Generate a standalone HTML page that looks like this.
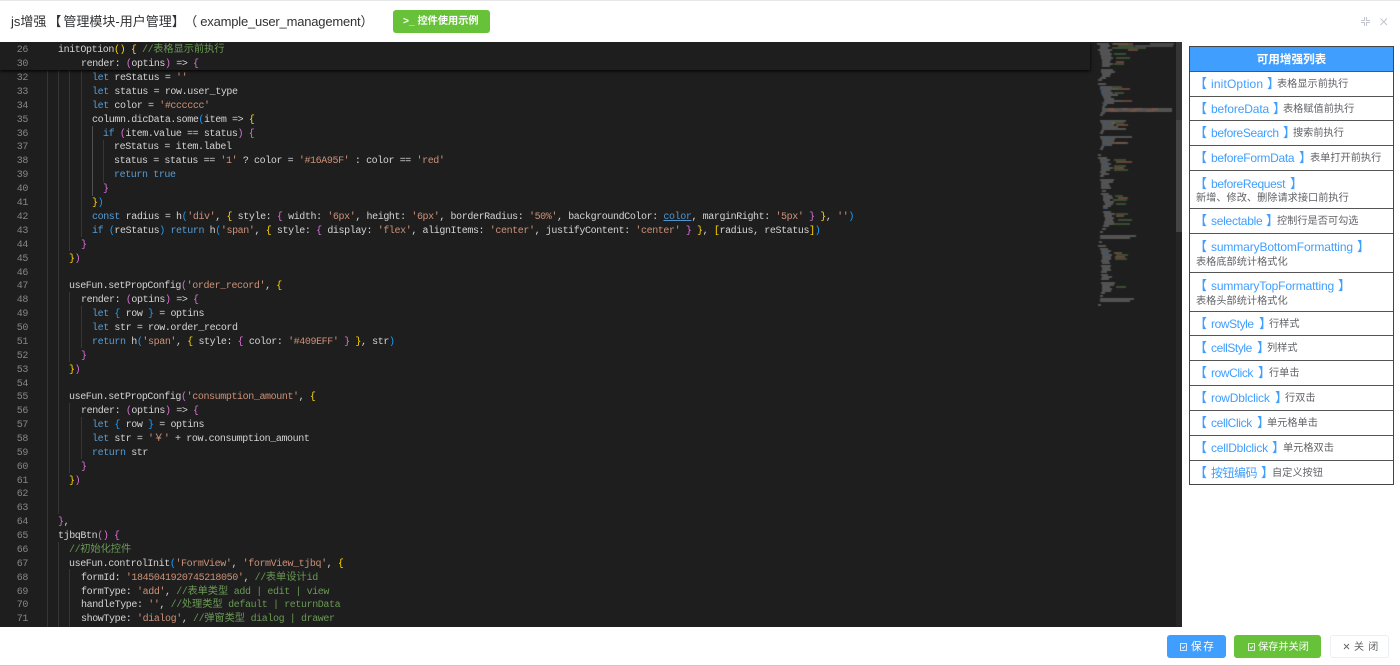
<!DOCTYPE html>
<html lang="zh">
<head>
<meta charset="utf-8">
<title>js增强</title>
<style>
*{box-sizing:border-box}
html,body{margin:0;padding:0;width:1400px;height:666px;overflow:hidden;background:#fff;font-family:"Liberation Sans","Noto Sans CJK SC",sans-serif}
#top{position:absolute;left:0;top:0;width:1400px;height:1px;background:#e8e8e8}
#title{position:absolute;left:11px;top:12px;font-size:13px;line-height:20px;color:#303133;white-space:pre;filter:blur(.25px)}
#title em{font-style:normal;letter-spacing:-.2px}
#demo{position:absolute;left:393px;top:10px;width:97px;height:23px;background:#67c23a;border-radius:3px;color:#fff;font-size:10.2px;line-height:24px;padding-left:10px;white-space:pre;font-weight:bold}
#editor{position:absolute;left:0;top:42px;width:1182px;height:585px;background:#1e1e1e;overflow:hidden}
.l,.n{position:absolute;height:14px;margin-top:2px;line-height:14px;font-family:"Liberation Mono","Noto Sans CJK SC",monospace;font-size:10px;letter-spacing:-.4px;white-space:pre}
.n{left:0;width:28px;text-align:right;color:#858585}
.l{color:#d4d4d4}
.g{position:absolute;width:1px;background:#363636}
.k{color:#569cd6}.s{color:#ce9178}.c{color:#6a9955}.y{color:#ffd700}.p{color:#da70d6}.b{color:#179fff}
.z{letter-spacing:0;font-size:10.2px}
.u{color:#4e94ce;text-decoration:underline}
#code{position:absolute;left:0;top:0;width:1095px;height:585px;filter:blur(.35px)}
#stick{position:absolute;left:0;top:0;width:1090px;height:28px;background:#1e1e1e;box-shadow:0 1px 3px #000}
#mini{position:absolute;left:1095px;top:0;filter:blur(.5px)}
#sb{position:absolute;left:1176px;top:0;width:6px;height:585px;background:#252525}
#sl{position:absolute;left:1176px;top:0;width:6px;height:78px;background:#353535}
#sl2{position:absolute;left:1176px;top:78px;width:6px;height:112px;background:#444}
#list{position:absolute;left:1189px;top:46px;width:205px;height:439px;border:1px solid #444;background:#fff;filter:blur(.25px)}
#list .h{position:absolute;left:0;top:0;width:203px;height:24px;background:#409eff;color:#fff;font-size:11.6px;line-height:25px;text-align:center;font-weight:bold}
.r{position:absolute;left:0;width:203px;height:40px;border-top:1px solid #555;white-space:pre}
.r i,.r b,.r u{position:absolute;height:14px;line-height:14px;font-style:normal;text-decoration:none;font-weight:normal}
.r i{left:21px;top:5px;color:#409eff;font-size:12px}
.r b{left:4px;top:5px;color:#409eff;font-size:13px}
.r u{top:6px;color:#606266;font-size:10.2px}
.r.t i,.r.t b{top:6px}
.r.t u{top:21px;left:6px}
.r.w u{top:22px}
#bar{position:absolute;left:0;top:665px;width:1400px;height:1px;background:#c8c8c8}
.btn{position:absolute;top:635px;height:23px;border-radius:3px}
.bt{position:absolute;top:637px;height:22px;font-size:10.4px;line-height:21px;white-space:pre}
</style>
</head>
<body>
<div id="top"></div>
<div id="title">js增强<span style="margin-left:2px">【</span><span style="margin-left:2px">管理模块</span>-用户管理】<span style="margin-left:6px">（</span><em style="margin-left:3px">example_user_management</em>）</div>
<div id="demo">&gt;_ 控件使用示例</div>
<svg style="position:absolute;left:1360px;top:16px" width="30" height="12" viewBox="0 0 30 12" fill="none" stroke="#c0c4cc" stroke-width="1"><path d="M4.500 1v3.500H1M6.500 1v3.500H10M4.500 10V6.500H1M6.500 10V6.500H10"/><path d="M20.500 2.500l6.500 6.500M27 2.500l-6.500 6.500"/></svg>

<div id="editor">
<div id="code">
<div class="g" style="left:47px;top:28px;height:557px"></div>
<div class="g" style="left:58px;top:28px;height:444px"></div>
<div class="g" style="left:58px;top:500px;height:85px"></div>
<div class="g" style="left:69px;top:28px;height:181px"></div>
<div class="g" style="left:69px;top:250px;height:70px"></div>
<div class="g" style="left:69px;top:361px;height:70px"></div>
<div class="g" style="left:69px;top:527px;height:58px"></div>
<div class="g" style="left:81px;top:28px;height:167px"></div>
<div class="g" style="left:81px;top:264px;height:42px"></div>
<div class="g" style="left:81px;top:375px;height:42px"></div>
<div class="g" style="left:92px;top:84px;height:70px;background:#505050"></div>
<div class="g" style="left:103px;top:98px;height:42px"></div>

<div class="n" style="top:28px">32</div><div class="l" style="top:28px;left:92px"><span class="k">let</span> reStatus = <span class="s">''</span></div>
<div class="n" style="top:42px">33</div><div class="l" style="top:42px;left:92px"><span class="k">let</span> status = row.user_type</div>
<div class="n" style="top:56px">34</div><div class="l" style="top:56px;left:92px"><span class="k">let</span> color = <span class="s">'#cccccc'</span></div>
<div class="n" style="top:70px">35</div><div class="l" style="top:70px;left:92px">column.dicData.some<span class="b">(</span>item =&gt; <span class="y">{</span></div>
<div class="n" style="top:84px">36</div><div class="l" style="top:84px;left:103px"><span class="k">if</span> <span class="p">(</span>item.value == status<span class="p">)</span> <span class="p">{</span></div>
<div class="n" style="top:97px">37</div><div class="l" style="top:97px;left:114px">reStatus = item.label</div>
<div class="n" style="top:111px">38</div><div class="l" style="top:111px;left:114px">status = status == <span class="s">'1'</span> ? color = <span class="s">'#16A95F'</span> : color == <span class="s">'red'</span></div>
<div class="n" style="top:125px">39</div><div class="l" style="top:125px;left:114px"><span class="k">return</span> <span class="k">true</span></div>
<div class="n" style="top:139px">40</div><div class="l" style="top:139px;left:103px"><span class="p">}</span></div>
<div class="n" style="top:153px">41</div><div class="l" style="top:153px;left:92px"><span class="y">}</span><span class="b">)</span></div>
<div class="n" style="top:167px">42</div><div class="l" style="top:167px;left:92px"><span class="k">const</span> radius = h<span class="b">(</span><span class="s">'div'</span>, <span class="y">{</span> style: <span class="p">{</span> width: <span class="s">'6px'</span>, height: <span class="s">'6px'</span>, borderRadius: <span class="s">'50%'</span>, backgroundColor: <span class="u">color</span>, marginRight: <span class="s">'5px'</span> <span class="p">}</span> <span class="y">}</span>, <span class="s">''</span><span class="b">)</span></div>
<div class="n" style="top:181px">43</div><div class="l" style="top:181px;left:92px"><span class="k">if</span> <span class="b">(</span>reStatus<span class="b">)</span> <span class="k">return</span> h<span class="b">(</span><span class="s">'span'</span>, <span class="y">{</span> style: <span class="p">{</span> display: <span class="s">'flex'</span>, alignItems: <span class="s">'center'</span>, justifyContent: <span class="s">'center'</span> <span class="p">}</span> <span class="y">}</span>, <span class="y">[</span>radius, reStatus<span class="y">]</span><span class="b">)</span></div>
<div class="n" style="top:195px">44</div><div class="l" style="top:195px;left:81px"><span class="p">}</span></div>
<div class="n" style="top:209px">45</div><div class="l" style="top:209px;left:69px"><span class="y">}</span><span class="p">)</span></div>
<div class="n" style="top:223px">46</div>
<div class="n" style="top:236px">47</div><div class="l" style="top:236px;left:69px">useFun.setPropConfig<span class="p">(</span><span class="s">'order_record'</span>, <span class="y">{</span></div>
<div class="n" style="top:250px">48</div><div class="l" style="top:250px;left:81px">render: <span class="p">(</span>optins<span class="p">)</span> =&gt; <span class="p">{</span></div>
<div class="n" style="top:264px">49</div><div class="l" style="top:264px;left:92px"><span class="k">let</span> <span class="b">{</span> row <span class="b">}</span> = optins</div>
<div class="n" style="top:278px">50</div><div class="l" style="top:278px;left:92px"><span class="k">let</span> str = row.order_record</div>
<div class="n" style="top:292px">51</div><div class="l" style="top:292px;left:92px"><span class="k">return</span> h<span class="b">(</span><span class="s">'span'</span>, <span class="y">{</span> style: <span class="p">{</span> color: <span class="s">'#409EFF'</span> <span class="p">}</span> <span class="y">}</span>, str<span class="b">)</span></div>
<div class="n" style="top:306px">52</div><div class="l" style="top:306px;left:81px"><span class="p">}</span></div>
<div class="n" style="top:320px">53</div><div class="l" style="top:320px;left:69px"><span class="y">}</span><span class="p">)</span></div>
<div class="n" style="top:334px">54</div>
<div class="n" style="top:347px">55</div><div class="l" style="top:347px;left:69px">useFun.setPropConfig<span class="p">(</span><span class="s">'consumption_amount'</span>, <span class="y">{</span></div>
<div class="n" style="top:361px">56</div><div class="l" style="top:361px;left:81px">render: <span class="p">(</span>optins<span class="p">)</span> =&gt; <span class="p">{</span></div>
<div class="n" style="top:375px">57</div><div class="l" style="top:375px;left:92px"><span class="k">let</span> <span class="b">{</span> row <span class="b">}</span> = optins</div>
<div class="n" style="top:389px">58</div><div class="l" style="top:389px;left:92px"><span class="k">let</span> str = <span class="s">'<span class="z">￥</span>'</span> + row.consumption_amount</div>
<div class="n" style="top:403px">59</div><div class="l" style="top:403px;left:92px"><span class="k">return</span> str</div>
<div class="n" style="top:417px">60</div><div class="l" style="top:417px;left:81px"><span class="p">}</span></div>
<div class="n" style="top:431px">61</div><div class="l" style="top:431px;left:69px"><span class="y">}</span><span class="p">)</span></div>
<div class="n" style="top:444px">62</div>
<div class="n" style="top:458px">63</div>
<div class="n" style="top:472px">64</div><div class="l" style="top:472px;left:58px"><span class="p">}</span>,</div>
<div class="n" style="top:486px">65</div><div class="l" style="top:486px;left:58px">tjbqBtn<span class="p">()</span> <span class="p">{</span></div>
<div class="n" style="top:500px">66</div><div class="l" style="top:500px;left:69px"><span class="c">//<span class="z">初始化控件</span></span></div>
<div class="n" style="top:514px">67</div><div class="l" style="top:514px;left:69px">useFun.controlInit<span class="b">(</span><span class="s">'FormView'</span>, <span class="s">'formView_tjbq'</span>, <span class="y">{</span></div>
<div class="n" style="top:528px">68</div><div class="l" style="top:528px;left:81px">formId: <span class="s">'1845041920745218050'</span>, <span class="c">//<span class="z">表单设计</span>id</span></div>
<div class="n" style="top:542px">69</div><div class="l" style="top:542px;left:81px">formType: <span class="s">'add'</span>, <span class="c">//<span class="z">表单类型</span> add | edit | view</span></div>
<div class="n" style="top:555px">70</div><div class="l" style="top:555px;left:81px">handleType: <span class="s">''</span>, <span class="c">//<span class="z">处理类型</span> default | returnData</span></div>
<div class="n" style="top:569px">71</div><div class="l" style="top:569px;left:81px">showType: <span class="s">'dialog'</span>, <span class="c">//<span class="z">弹窗类型</span> dialog | drawer</span></div>

<div id="stick">
<div class="n" style="top:0">26</div><div class="l" style="top:0;left:58px">initOption<span class="y">()</span> <span class="y">{</span> <span class="c">//<span class="z">表格显示前执行</span></span></div>
<div class="n" style="top:14px">30</div><div class="l" style="top:14px;left:81px">render: <span class="p">(</span>optins<span class="p">)</span> =&gt; <span class="p">{</span></div>
</div>
</div>

<svg id="mini" width="81" height="270" viewBox="1095 42 81 270" fill="none" stroke-width="1.2">
<g stroke="#8f8f8f" opacity=".75">
<path d="M1097 44h12M1100 46h10M1100 48h8M1098 50h14M1100 52h10M1100 54h12M1101 56h10M1101 58h12M1102 60h9M1102 62h8M1102 64h11M1102 66h8M1101 70h12M1101 72h14M1102 74h9M1102 76h8M1100 78h6M1098 80h4"/>
<path d="M1098 84h8M1100 87h12M1100 89h18M1101 91h10M1101 93h12M1102 95h16M1103 97h8M1104 99h10M1104 101h18M1104 103h10M1103 105h4M1102 107h3M1102 109h70M1102 111h70M1101 113h4M1100 115h3M1100 121h26M1101 123h14M1102 125h12M1102 127h16M1102 129h24M1101 131h3M1100 133h3M1100 137h32M1101 139h14M1102 141h12M1102 143h26M1102 145h10M1101 147h3M1100 149h3"/>
<path d="M1098 155h3M1098 158h9M1100 160h10M1100 162h8M1101 164h10M1101 166h8M1101 168h12M1101 170h9M1100 172h6M1101 174h8M1100 176h4M1100 180h14M1101 182h12M1101 184h8M1101 186h9M1101 188h10M1102 191h4M1101 194h8M1103 196h9M1103 198h10M1103 200h7M1104 202h10M1105 204h8M1103 206h8M1103 208h5"/>
<path d="M1103 212h8M1104 214h11M1104 216h8M1105 218h9M1105 220h8M1104 222h10M1104 224h10M1103 226h6M1102 229h4M1100 232h3M1100 236h36M1100 238h30M1099 242h3M1098 246h8M1100 249h8M1101 251h10M1101 253h8M1102 255h10M1102 257h9M1102 259h9M1101 261h8M1102 263h8M1101 266h10M1102 268h8M1102 270h9M1101 272h6M1101 275h7M1102 277h10M1101 279h8M1101 283h14M1102 285h12M1102 287h8M1102 289h10M1102 291h9M1101 293h4M1100 296h3M1100 299h34M1100 301h30M1098 305h3"/>
</g>
<g stroke="#6a9955" opacity=".6">
<path d="M1112 44h16M1112 48h34M1118 46h16M1114 54h12M1116 58h14M1114 64h10M1112 87h10M1114 93h10M1112 123h12M1114 160h12M1114 166h12M1114 170h14M1115 196h8M1113 200h14M1116 204h10M1116 214h12M1118 220h14M1114 224h16M1116 255h12M1115 259h12M1116 287h10"/>
</g>
<g stroke="#a96b52" opacity=".8">
<path d="M1113 44h20M1128 50h10M1116 62h8M1118 89h12M1122 101h10M1108 109h6M1122 109h6M1134 109h8M1152 109h6M1110 111h8M1130 111h6M1146 111h8M1116 125h12M1116 143h10M1116 162h16M1114 168h10M1118 198h10M1116 216h8M1114 253h8M1115 257h10"/>
</g>
<path d="M1150 44h24M1135 46h38" stroke="#8f8f8f" opacity=".6"/>
<g stroke="#3f6f9d" opacity=".8">
<path d="M1100 89h4M1101 93h4M1102 103h3M1102 123h5M1102 139h5M1102 145h4M1102 164h5M1103 208h5M1102 255h6"/>
</g>
</svg>
<div id="sb"></div>
<div id="sl"></div>
<div id="sl2"></div>
</div>

<div id="list">
<div class="h">可用增强列表</div>
<div class="r" style="top:24px"><b>【</b><i style="letter-spacing:.15px">initOption</i><b style="left:77px">】</b><u style="left:87px">表格显示前执行</u></div>
<div class="r" style="top:49px"><b>【</b><i style="letter-spacing:-.13px">beforeData</i><b style="left:83px">】</b><u style="left:93px">表格赋值前执行</u></div>
<div class="r" style="top:73px"><b>【</b><i style="letter-spacing:-.36px">beforeSearch</i><b style="left:93px">】</b><u style="left:103px">搜索前执行</u></div>
<div class="r" style="top:98px"><b>【</b><i style="letter-spacing:-.29px">beforeFormData</i><b style="left:109px">】</b><u style="left:120px">表单打开前执行</u></div>
<div class="r t" style="top:123px"><b>【</b><i style="letter-spacing:-.36px">beforeRequest</i><b style="left:100px">】</b><u>新增、修改、删除请求接口前执行</u></div>
<div class="r" style="top:161px"><b>【</b><i style="letter-spacing:-.26px">selectable</i><b style="left:76px">】</b><u style="left:87px">控制行是否可勾选</u></div>
<div class="r t w" style="top:186px"><b>【</b><i style="letter-spacing:-.12px">summaryBottomFormatting</i><b style="left:167px">】</b><u>表格底部统计格式化</u></div>
<div class="r t w" style="top:225px"><b>【</b><i style="letter-spacing:-.15px">summaryTopFormatting</i><b style="left:148px">】</b><u>表格头部统计格式化</u></div>
<div class="r" style="top:264px"><b>【</b><i style="letter-spacing:-.42px">rowStyle</i><b style="left:69px">】</b><u style="left:79px">行样式</u></div>
<div class="r" style="top:288px"><b>【</b><i style="letter-spacing:-.42px">cellStyle</i><b style="left:67px">】</b><u style="left:77px">列样式</u></div>
<div class="r" style="top:313px"><b>【</b><i style="letter-spacing:-.42px">rowClick</i><b style="left:68px">】</b><u style="left:79px">行单击</u></div>
<div class="r" style="top:338px"><b>【</b><i style="letter-spacing:-.18px">rowDblclick</i><b style="left:85px">】</b><u style="left:95px">行双击</u></div>
<div class="r" style="top:363px"><b>【</b><i style="letter-spacing:-.34px">cellClick</i><b style="left:67px">】</b><u style="left:77px">单元格单击</u></div>
<div class="r" style="top:388px"><b>【</b><i style="letter-spacing:-.2px">cellDblclick</i><b style="left:82px">】</b><u style="left:93px">单元格双击</u></div>
<div class="r" style="top:413px;height:24px"><b>【</b><i style="letter-spacing:-.5px">按钮编码</i><b style="left:71px">】</b><u style="left:82px">自定义按钮</u></div>
</div>

<div class="btn" style="left:1167px;width:59px;background:#409eff"></div>
<svg style="position:absolute;left:1180px;top:643px" width="7" height="8" viewBox="0 0 7 8" fill="none" stroke="#fff" stroke-width=".8"><path d="M.5.500h6v7h-6zM2 4.200l1.200 1.200L5 3"/></svg>
<div class="bt" style="left:1191px;color:#fff;letter-spacing:1.6px;font-size:10.6px">保存</div>
<div class="btn" style="left:1234px;width:87px;background:#67c23a"></div>
<svg style="position:absolute;left:1248px;top:643px" width="7" height="8" viewBox="0 0 7 8" fill="none" stroke="#fff" stroke-width=".8"><path d="M.5.500h6v7h-6zM2 4.200l1.200 1.200L5 3"/></svg>
<div class="bt" style="left:1258px;color:#fff;font-size:10.2px">保存并关闭</div>
<div class="btn" style="left:1330px;width:59px;background:#fff;border:1px solid #ebeef5"></div>
<svg style="position:absolute;left:1343px;top:643px" width="7" height="7" viewBox="0 0 7 7" fill="none" stroke="#606266" stroke-width=".9"><path d="M1 1l5 5M6 1L1 6"/></svg>
<div class="bt" style="left:1354px;color:#606266;letter-spacing:4.200px;font-size:10px">关闭</div>
<div id="bar"></div>
</body>
</html>
